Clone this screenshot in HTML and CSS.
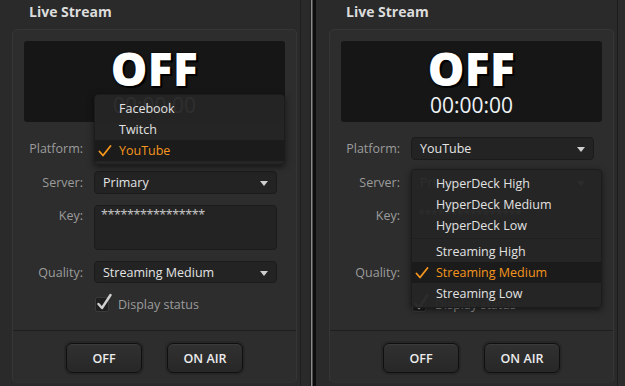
FILE: index.html
```html
<!DOCTYPE html>
<html>
<head>
	<meta charset="utf-8">
	<title>Live Stream</title>
	<link rel="stylesheet" href="styles.css">
</head>

<body>

	<div class="screen">

		<!-- 左侧：平台菜单展开 -->
		<section class="panel panel-left">
			<h2 class="title">Live Stream</h2>
			<div class="box">
				<div class="status">
					<div class="state">OFF</div>
					<div class="timer">00:00:00</div>
				</div>
				<div class="form">
					<span class="label">Platform:</span>
					<div class="select">YouTube<i class="arrow"></i></div>
					<span class="label">Server:</span>
					<div class="select">Primary<i class="arrow"></i></div>
					<span class="label label-top">Key:</span>
					<div class="field">****************</div>
					<span class="label">Quality:</span>
					<div class="select">Streaming Medium<i class="arrow"></i></div>
				</div>
				<div class="check-row">
					<span class="checkbox">
						<svg width="16" height="18" viewBox="0 0 16 18"><path d="M2.5 11 L6 15 L14.5 2" fill="none" stroke="#d0d0d0" stroke-width="2.4" stroke-linecap="round" stroke-linejoin="round"/></svg>
					</span>
					<span class="check-text">Display status</span>
				</div>
				<div class="actions">
					<button class="btn">OFF</button>
					<button class="btn">ON AIR</button>
				</div>

				<ul class="menu menu-platform">
					<li>Facebook</li>
					<li>Twitch</li>
					<li class="selected">
						<svg class="tick" width="14" height="12" viewBox="0 0 14 12"><path d="M1.5 6.5 L5 10.5 L12.5 1" fill="none" stroke="#f5961d" stroke-width="1.8" stroke-linecap="round" stroke-linejoin="round"/></svg>
						YouTube
					</li>
				</ul>
			</div>
		</section>

		<div class="divider"></div>

		<!-- 右侧：画质菜单展开 -->
		<section class="panel panel-right">
			<h2 class="title">Live Stream</h2>
			<div class="box">
				<div class="status">
					<div class="state">OFF</div>
					<div class="timer">00:00:00</div>
				</div>
				<div class="form">
					<span class="label">Platform:</span>
					<div class="select">YouTube<i class="arrow"></i></div>
					<span class="label">Server:</span>
					<div class="select">Primary<i class="arrow"></i></div>
					<span class="label label-top">Key:</span>
					<div class="field">****************</div>
					<span class="label">Quality:</span>
					<div class="select">Streaming Medium<i class="arrow"></i></div>
				</div>
				<div class="check-row">
					<span class="checkbox">
						<svg width="16" height="18" viewBox="0 0 16 18"><path d="M2.5 11 L6 15 L14.5 2" fill="none" stroke="#d0d0d0" stroke-width="2.4" stroke-linecap="round" stroke-linejoin="round"/></svg>
					</span>
					<span class="check-text">Display status</span>
				</div>
				<div class="actions">
					<button class="btn">OFF</button>
					<button class="btn">ON AIR</button>
				</div>

				<ul class="menu menu-quality">
					<li>HyperDeck High</li>
					<li>HyperDeck Medium</li>
					<li>HyperDeck Low</li>
					<li class="sep"></li>
					<li>Streaming High</li>
					<li class="selected">
						<svg class="tick" width="14" height="12" viewBox="0 0 14 12"><path d="M1.5 6.5 L5 10.5 L12.5 1" fill="none" stroke="#f5961d" stroke-width="1.8" stroke-linecap="round" stroke-linejoin="round"/></svg>
						Streaming Medium
					</li>
					<li>Streaming Low</li>
				</ul>
			</div>
		</section>

		<div class="edge"></div>
	</div>

</body>
</html>
```

FILE: styles.css
```css
* {
	padding: 0;
	margin: 0;
	box-sizing: border-box;
}
html, body {
	width: 625px;
	height: 386px;
	overflow: hidden;
	background-color: #2a2a2a;
	font-family: "Open Sans", "Liberation Sans", sans-serif;
	font-size: 12.5px;
	color: #e2e2e2;
}
.screen {
	display: flex;
	height: 386px;
}

/* 面板 */
.panel {
	flex: none;
	width: 301px;
	padding: 0 3px 0 13px;
	background-color: #2a2a2a;
}
.panel-left {
	margin-left: -1px;
}
.title {
	height: 29px;
	padding-left: 17px;
	font-size: 14px;
	font-weight: 700;
	line-height: 24px;
	color: #dcdcdc;
}
.box {
	position: relative;
	height: 354px;
	display: flex;
	flex-direction: column;
	background-color: #2d2d2d;
	border: 1px solid #363636;
	border-bottom-color: #303030;
	border-radius: 5px;
}

/* 状态显示 */
.status {
	margin: 11px 11px 0;
	height: 81px;
	background-color: #161616;
	border-radius: 3px;
	text-align: center;
}
.state {
	padding-top: 1px;
	font-size: 46px;
	font-weight: 800;
	line-height: 52px;
	letter-spacing: 0.5px;
	color: #fff;
	text-shadow: 2px 2px 0 #000, 1px 1px 2px #000, 0 0 2px #000;
}
.timer {
	margin-top: -2px;
	font-size: 21px;
	line-height: 26px;
	color: #eef2f6;
}

/* 表单 */
.form {
	display: grid;
	grid-template-columns: 70px 183px;
	grid-template-rows: 23px 23px 45px 22px;
	column-gap: 11px;
	row-gap: 11px;
	margin-top: 15px;
}
.label {
	text-align: right;
	line-height: 23px;
	color: #9c9c9c;
}
.label-top {
	line-height: 22px;
}
.select, .field {
	position: relative;
	padding-left: 8px;
	background-color: #232323;
	border: 1px solid #1b1b1b;
	border-radius: 4px;
	line-height: 21px;
	color: #e4e4e4;
}
.field {
	padding-left: 6px;
	line-height: 18px;
	letter-spacing: -0.4px;
	color: #c8c8c8;
}
.arrow {
	position: absolute;
	right: 8px;
	top: 9px;
	width: 0;
	height: 0;
	border-left: 4px solid transparent;
	border-right: 4px solid transparent;
	border-top: 5px solid #cfcfcf;
}

.check-row {
	display: flex;
	align-items: center;
	height: 15px;
	margin: 14px 0 0 82px;
}
.checkbox {
	position: relative;
	width: 14px;
	height: 15px;
	background-color: #1f1f1f;
	border: 1px solid #3a3a3a;
	border-radius: 2px;
}
.checkbox svg {
	position: absolute;
	left: 0;
	top: -5px;
}
.check-text {
	margin-left: 9px;
	color: #9c9c9c;
}

/* 按钮 */
.actions {
	display: flex;
	justify-content: center;
	gap: 25px;
	margin-top: auto;
	height: 52px;
	padding-top: 12px;
	border-top: 1px solid #1f1f1f;
}
.btn {
	width: 76px;
	height: 30px;
	font-family: inherit;
	font-size: 12.5px;
	font-weight: 600;
	color: #ececec;
	background: linear-gradient(#313131, #272727);
	border: 1px solid #0f0f0f;
	border-radius: 6px;
	box-shadow: 0 0 0 2px #262626, inset 0 1px 0 #3a3a3a;
}

/* 下拉菜单 */
.menu {
	position: absolute;
	left: 81px;
	width: 191px;
	padding: 3px 0;
	list-style: none;
	background-color: rgba(37, 37, 37, 0.96);
	border: 1px solid #1c1c1c;
	border-radius: 4px;
	box-shadow: 0 2px 6px rgba(0, 0, 0, 0.55);
}
.menu-platform {
	top: 64px;
}
.menu-quality {
	top: 139px;
}
.menu li {
	position: relative;
	height: 21px;
	padding-left: 24px;
	line-height: 21px;
	color: #e2e2e2;
}
.menu li.selected {
	background-color: #1b1b1b;
	color: #f5961d;
}
.menu li.sep {
	height: 3px;
	margin-top: 2px;
	border-top: 1px solid #202020;
}
.tick {
	position: absolute;
	left: 3px;
	top: 5px;
}

/* 中间分隔 */
.divider {
	flex: none;
	width: 16px;
	background: linear-gradient(to right,
		#1f1f1f 0, #1f1f1f 1px,
		#2a2a2a 1px, #2a2a2a 10px,
		#1e1e1e 10px, #1e1e1e 11px,
		#8c8c8c 11px, #8c8c8c 12px,
		#4a4a4a 12px, #4a4a4a 13px,
		#0d0d0d 13px);
}
.edge {
	flex: 1;
	background-color: #2c2c2c;
	border-left: 1px solid #1c1c1c;
}
```
